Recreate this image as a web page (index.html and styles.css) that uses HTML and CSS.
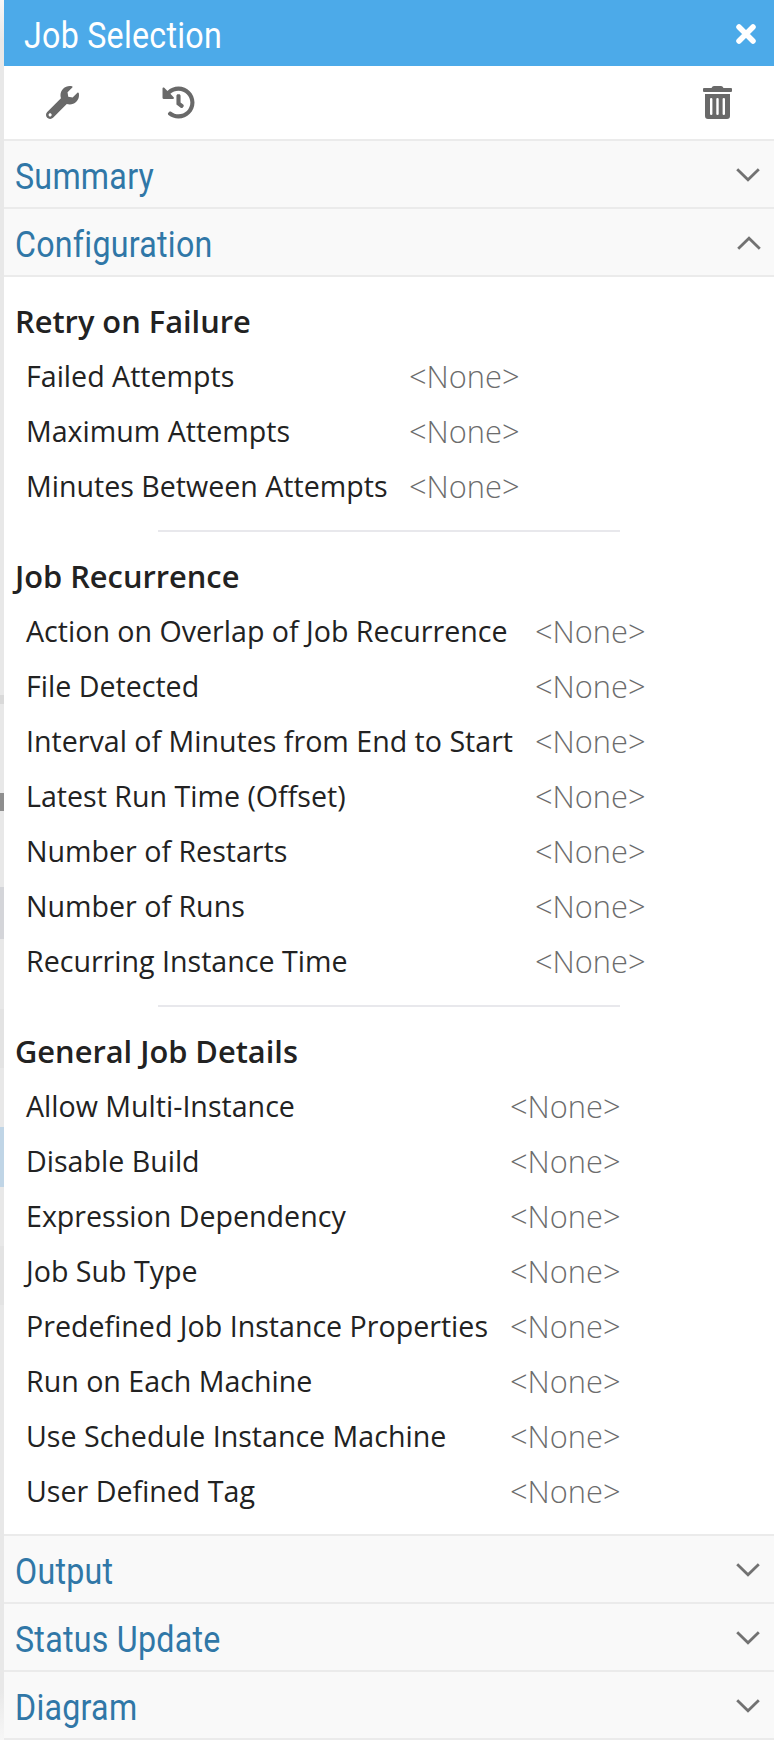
FILE: index.html
```html
<!DOCTYPE html>
<html lang="en">
<head>
<meta charset="utf-8">
<title>Job Selection</title>
<link rel="stylesheet" href="styles.css">
</head>
<body>
<div class="edge"></div>
<main class="panel">
  <header class="titlebar">
    <h1 class="condensed">Job Selection</h1>
    <svg class="close" width="20" height="20" viewBox="0 0 20 20"><path d="M3 3L17 17M17 3L3 17"/></svg>
  </header>
  <div class="toolbar">
    <svg class="wrench" width="33" height="33" viewBox="0 0 512 512"><path d="M507.700 109.100c-2.200-9-13.500-12.100-20.100-5.500l-74.400 74.400-67.900-11.300L334 98.900l74.400-74.400c6.600-6.600 3.400-17.900-5.700-20.200-47.400-11.700-99.600.9-136.600 37.900-39.600 39.600-50.500 97.100-34.100 147.200L18.700 402.800c-25 25-25 65.500 0 90.500s65.500 25 90.500 0l213.200-213.200c50.100 16.700 107.500 5.700 147.400-34.200 37.100-37.100 49.700-89.300 37.900-136.800zM64 472c-13.200 0-24-10.800-24-24 0-13.300 10.700-24 24-24s24 10.700 24 24c0 13.200-10.700 24-24 24z"/></svg>
    <svg class="history" width="33" height="33" viewBox="0 0 512 512"><path d="M504 255.500c.3 136.600-111.200 248.400-247.800 248.500-59 0-113.200-20.500-155.800-54.900-11.100-8.900-11.900-25.500-1.800-35.600l11.300-11.300c8.600-8.600 22.400-9.600 31.900-2C173.100 425.100 212.900 440 256 440c101.700 0 184-82.300 184-184 0-101.700-82.300-184-184-184-48.800 0-93.100 19-126.100 49.900l50.800 50.800c10.100 10.100 2.900 27.300-11.300 27.300H24c-8.800 0-16-7.200-16-16V38.600c0-14.300 17.200-21.400 27.300-11.300l49.400 49.400C129.200 34.100 189.600 8 256 8c136.800 0 247.700 110.800 248 247.500zM323.100 333.800l9.800-12.600c8.100-10.500 6.300-25.500-4.200-33.700L288 255.900V152c0-13.300-10.700-24-24-24h-16c-13.300 0-24 10.700-24 24v135.100l65.400 50.900c10.500 8.100 25.500 6.300 33.700-4.200z"/></svg>
    <svg class="trash" width="29" height="33" viewBox="0 0 29 33"><path fill-rule="evenodd" d="M1 2H8.500Q9.300 0 11 0H18Q19.700 0 20.500 2H28Q29 2 29 3V5Q29 6 28 6H1Q0 6 0 5V3Q0 2 1 2ZM2 8H27V30Q27 33 24 33H5Q2 33 2 30ZM7 13V28Q7 29 8.200 29T9.400 28V13Q9.400 12 8.200 12T7 13ZM13.300 13V28Q13.300 29 14.500 29T15.700 28V13Q15.700 12 14.500 12T13.300 13ZM19.600 13V28Q19.600 29 20.800 29T22 28V13Q22 12 20.800 12T19.600 13Z"/></svg>
  </div>
  <section class="bar"><h2 class="condensed">Summary</h2><svg class="chevron" width="24" height="14" viewBox="0 0 24 14"><path d="M1.200 1.200L12 11.700L22.800 1.200"/></svg></section>
  <section class="bar"><h2 class="condensed">Configuration</h2><svg class="chevron up" width="24" height="14" viewBox="0 0 24 14"><path d="M1.200 12.800L12 2.300L22.800 12.800"/></svg></section>
  <div class="content">
    <h3>Retry on Failure</h3>
    <dl class="retry">
      <dt>Failed Attempts</dt><dd>&lt;None&gt;</dd>
      <dt>Maximum Attempts</dt><dd>&lt;None&gt;</dd>
      <dt>Minutes Between Attempts</dt><dd>&lt;None&gt;</dd>
    </dl>
    <hr>
    <h3>Job Recurrence</h3>
    <dl class="recurrence">
      <dt>Action on Overlap of Job Recurrence</dt><dd>&lt;None&gt;</dd>
      <dt>File Detected</dt><dd>&lt;None&gt;</dd>
      <dt>Interval of Minutes from End to Start</dt><dd>&lt;None&gt;</dd>
      <dt>Latest Run Time (Offset)</dt><dd>&lt;None&gt;</dd>
      <dt>Number of Restarts</dt><dd>&lt;None&gt;</dd>
      <dt>Number of Runs</dt><dd>&lt;None&gt;</dd>
      <dt>Recurring Instance Time</dt><dd>&lt;None&gt;</dd>
    </dl>
    <hr>
    <h3>General Job Details</h3>
    <dl class="general">
      <dt>Allow Multi-Instance</dt><dd>&lt;None&gt;</dd>
      <dt>Disable Build</dt><dd>&lt;None&gt;</dd>
      <dt>Expression Dependency</dt><dd>&lt;None&gt;</dd>
      <dt>Job Sub Type</dt><dd>&lt;None&gt;</dd>
      <dt>Predefined Job Instance Properties</dt><dd>&lt;None&gt;</dd>
      <dt>Run on Each Machine</dt><dd>&lt;None&gt;</dd>
      <dt>Use Schedule Instance Machine</dt><dd>&lt;None&gt;</dd>
      <dt>User Defined Tag</dt><dd>&lt;None&gt;</dd>
    </dl>
  </div>
  <section class="bar"><h2 class="condensed">Output</h2><svg class="chevron" width="24" height="14" viewBox="0 0 24 14"><path d="M1.200 1.200L12 11.700L22.800 1.200"/></svg></section>
  <section class="bar"><h2 class="condensed">Status Update</h2><svg class="chevron" width="24" height="14" viewBox="0 0 24 14"><path d="M1.200 1.200L12 11.700L22.800 1.200"/></svg></section>
  <section class="bar last"><h2 class="condensed">Diagram</h2><svg class="chevron" width="24" height="14" viewBox="0 0 24 14"><path d="M1.200 1.200L12 11.700L22.800 1.200"/></svg></section>
</main>
</body>
</html>
```
FILE: styles.css
```css
* { box-sizing: border-box; }
body {
  margin: 0;
  display: flex;
  width: 774px;
  height: 1740px;
  overflow: hidden;
  background: #fff;
  color: #222;
  font-family: "Open Sans", "Noto Sans", sans-serif;
}
h1, h2, h3, dl, dd { margin: 0; }
svg { display: block; flex: none; }

/* Strip of the page that lies behind the panel */
.edge {
  width: 4px;
  height: 1740px;
  flex: none;
  background: linear-gradient(#f7f7f7 0, #e8e8e8 40px, #e8e8e8 695px, #d9d9d9 695px, #d9d9d9 704px, #e8e8e8 704px, #e8e8e8 793px, #8e8e8e 793px, #8e8e8e 811px, #e8e8e8 811px, #e8e8e8 887px, #d4d5d9 887px, #d4d5d9 939px, #e8e8e8 939px, #e8e8e8 1009px, #e3e3e3 1009px, #e3e3e3 1068px, #e8e8e8 1068px, #e8e8e8 1127px, #c0d5e6 1127px, #c0d5e6 1187px, #e8e8e8 1187px, #e8e8e8 1246px, #e3e3e3 1246px, #e3e3e3 1305px, #e8e8e8 1305px, #e8e8e8 1690px, #f7f7f7 1740px);
}
.panel { flex: 1; background: #fff; }

.condensed {
  font: 400 37px/44px Roboto, sans-serif;
  letter-spacing: .3px;
  transform: scaleX(.87);
  transform-origin: left center;
  white-space: nowrap;
}
.titlebar {
  height: 66px;
  padding: 5px 18px 0 20px;
  display: flex;
  align-items: center;
  justify-content: space-between;
  background: #4caae9;
  color: #fff;
}
.close { fill: none; stroke: #fff; stroke-width: 5.500; stroke-linecap: round; margin-top: -4px; }

.toolbar {
  height: 73px;
  padding: 20px 42px 0;
  display: flex;
  align-items: flex-start;
  fill: #696969;
}
.history { margin-left: 83px; }
.trash { margin-left: auto; }

.bar {
  height: 68px;
  padding: 6px 14px 0 11px;
  display: flex;
  align-items: center;
  justify-content: space-between;
  background: #f9f9f9;
  border-top: 2px solid #ebebeb;
  color: #3077a7;
}
.chevron { fill: none; stroke: #727272; stroke-width: 2.800; margin-top: -5px; }
.chevron.up { margin: -4px -1px 0 0; }
.bar.last { height: 70px; border-bottom: 2px solid #ebebeb; }

.content {
  height: 1259px;
  padding: 17px 0 0 11px;
  border-top: 2px solid #ebebeb;
}
h3 { font-size: 30.800px; font-weight: 600; line-height: 55px; }
dl {
  display: grid;
  grid-auto-rows: 55px;
  padding-left: 11px;
  line-height: 53px;
  white-space: nowrap;
}
.retry { grid-template-columns: 383px auto; }
.recurrence { grid-template-columns: 509px auto; }
.general { grid-template-columns: 484px auto; }
dt { font-size: 28.600px; }
dd { font: 300 30.800px/55px "Open Sans", "Noto Sans", sans-serif; color: #6c6c6c; }
hr {
  width: 462px;
  height: 2px;
  margin: 16px 0 17px 143px;
  border: 0;
  background: #e8e8ec;
}
```
